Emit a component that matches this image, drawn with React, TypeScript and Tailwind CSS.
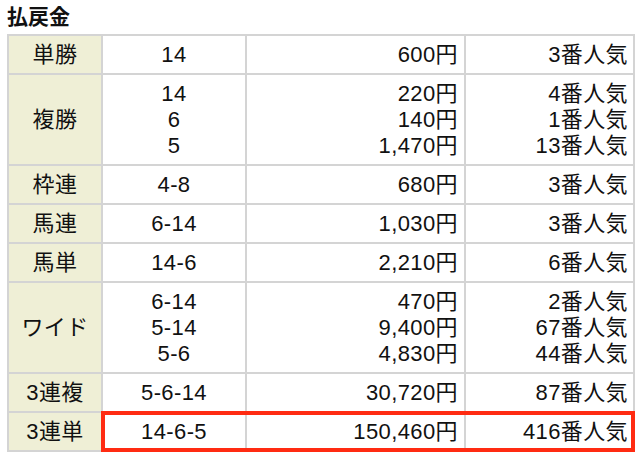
import React from 'react';

type Row = {
  label: string;
  combos: string[];
  payouts: string[];
  ranks: string[];
  highlight?: boolean;
};

const rows: Row[] = [
  { label: '単勝', combos: ['14'], payouts: ['600円'], ranks: ['3番人気'] },
  {
    label: '複勝',
    combos: ['14', '6', '5'],
    payouts: ['220円', '140円', '1,470円'],
    ranks: ['4番人気', '1番人気', '13番人気'],
  },
  { label: '枠連', combos: ['4-8'], payouts: ['680円'], ranks: ['3番人気'] },
  { label: '馬連', combos: ['6-14'], payouts: ['1,030円'], ranks: ['3番人気'] },
  { label: '馬単', combos: ['14-6'], payouts: ['2,210円'], ranks: ['6番人気'] },
  {
    label: 'ワイド',
    combos: ['6-14', '5-14', '5-6'],
    payouts: ['470円', '9,400円', '4,830円'],
    ranks: ['2番人気', '67番人気', '44番人気'],
  },
  { label: '3連複', combos: ['5-6-14'], payouts: ['30,720円'], ranks: ['87番人気'] },
  { label: '3連単', combos: ['14-6-5'], payouts: ['150,460円'], ranks: ['416番人気'], highlight: true },
];

const cell = 'border-2 border-[#d4d4d4] pt-[6px] pb-[5px] align-middle';

// red frame drawn over the highlighted cells
const Frame = ({ side }: { side: 'left' | 'mid' | 'right' }) => (
  <span
    className={
      side === 'left'
        ? 'pointer-events-none absolute -top-[2px] -bottom-[2px] -left-[2px] -right-[1px] border-y-[4px] border-l-[4px] border-[#ff2b12]'
        : side === 'right'
        ? 'pointer-events-none absolute -top-[2px] -bottom-[2px] -left-[1px] -right-[2px] border-y-[4px] border-r-[4px] border-[#ff2b12]'
        : 'pointer-events-none absolute -top-[2px] -bottom-[2px] -left-[1px] -right-[1px] border-y-[4px] border-[#ff2b12]'
    }
  />
);

export default function App() {
  return (
    <div
      className="w-[640px] h-[457px] bg-white px-[7px] pt-[3px] text-[#111] overflow-hidden"
      style={{ fontFamily: '"Liberation Sans", "Noto Sans CJK JP", sans-serif' }}
    >
      <h2 className="text-[21px] leading-[28px] font-bold mb-[3px]">払戻金</h2>
      <table className="table-fixed border-collapse w-[626px] text-[22px] leading-[26px] tracking-[0.4px]">
        <colgroup>
          <col className="w-[94px]" />
          <col className="w-[144px]" />
          <col className="w-[219px]" />
          <col className="w-[169px]" />
        </colgroup>
        <tbody>
          {rows.map((r) => (
            <tr key={r.label}>
              <th className={`${cell} bg-[#efefd6] font-normal text-center`}>{r.label}</th>
              <td className={`${cell} text-center relative`}>
                {r.combos.map((c) => (
                  <div key={c}>{c}</div>
                ))}
                {r.highlight && <Frame side="left" />}
              </td>
              <td className={`${cell} text-right pr-[6px] relative`}>
                {r.payouts.map((p) => (
                  <div key={p}>{p}</div>
                ))}
                {r.highlight && <Frame side="mid" />}
              </td>
              <td className={`${cell} text-right pr-[5px] relative`}>
                {r.ranks.map((k) => (
                  <div key={k}>{k}</div>
                ))}
                {r.highlight && <Frame side="right" />}
              </td>
            </tr>
          ))}
        </tbody>
      </table>
    </div>
  );
}
